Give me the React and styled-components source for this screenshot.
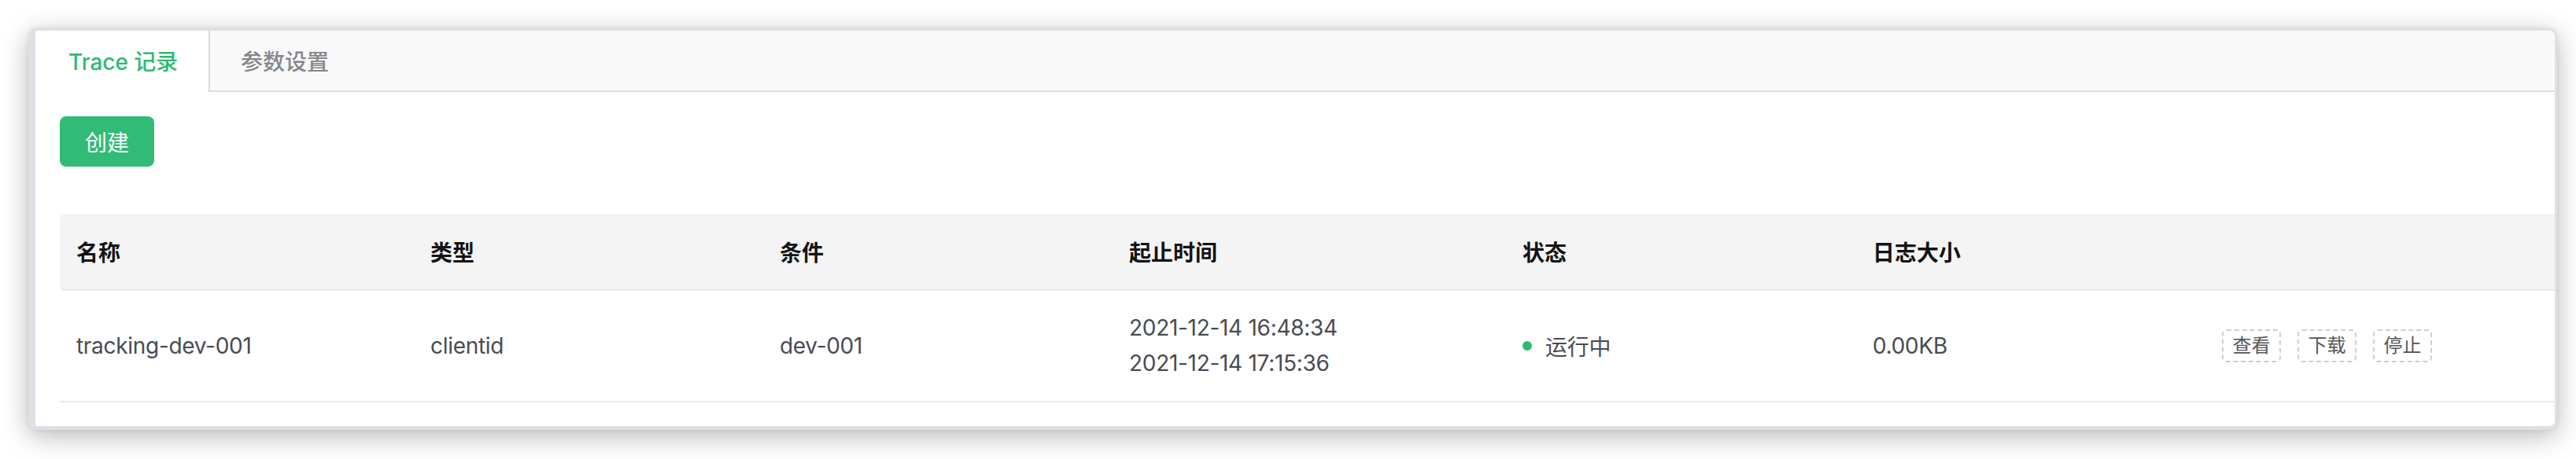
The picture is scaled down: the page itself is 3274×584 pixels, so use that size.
import styled, { createGlobalStyle } from "styled-components";

const GlobalStyle = createGlobalStyle`
  html, body {
    margin: 0;
    padding: 0;
    background: #ffffff;
  }
  body {
    font-family: Inter, "Noto Sans CJK SC", sans-serif;
    -webkit-font-smoothing: antialiased;
  }
  * {
    box-sizing: border-box;
  }
`;

const columns = [
  { key: "name", title: "名称" },
  { key: "type", title: "类型" },
  { key: "condition", title: "条件" },
  { key: "time", title: "起止时间" },
  { key: "status", title: "状态" },
  { key: "size", title: "日志大小" },
  { key: "actions", title: "" },
];

const records = [
  {
    id: 1,
    name: "tracking-dev-001",
    type: "clientid",
    condition: "dev-001",
    start: "2021-12-14 16:48:34",
    end: "2021-12-14 17:15:36",
    status: "运行中",
    size: "0.00KB",
  },
];

export default function App() {
  return (
    <>
      <GlobalStyle />
      <Page>
        <Window>
          <TabBar>
            <Tab $active>Trace 记录</Tab>
            <Tab>参数设置</Tab>
            <TabFill />
          </TabBar>
          <Content>
            <CreateButton>创建</CreateButton>
            <Table>
              <HeaderRow>
                {columns.map((col) => (
                  <HeadCell key={col.key}>{col.title}</HeadCell>
                ))}
              </HeaderRow>
              {records.map((row) => (
                <BodyRow key={row.id}>
                  <Cell>{row.name}</Cell>
                  <Cell>{row.type}</Cell>
                  <Cell>{row.condition}</Cell>
                  <Cell>
                    <TimeRange>
                      <span>{row.start}</span>
                      <span>{row.end}</span>
                    </TimeRange>
                  </Cell>
                  <Cell>
                    <Status>
                      <Dot />
                      {row.status}
                    </Status>
                  </Cell>
                  <Cell>{row.size}</Cell>
                  <Cell>
                    <Actions>
                      <ActionButton>查看</ActionButton>
                      <ActionButton>下载</ActionButton>
                      <ActionButton>停止</ActionButton>
                    </Actions>
                  </Cell>
                </BodyRow>
              ))}
            </Table>
          </Content>
        </Window>
      </Page>
    </>
  );
}

const Page = styled.div`
  padding: 36px 0 0 36px;
  height: 584px;
  overflow: hidden;
`;

const Window = styled.div`
  width: 3214px;
  height: 511px;
  background: #ffffff;
  border-style: solid;
  border-color: #dfe0e6;
  border-width: 3px 3px 5px 9px;
  border-radius: 10px;
  box-shadow: 0 8px 34px rgba(0, 0, 0, 0.28), 0 0 6px rgba(0, 0, 0, 0.08);
  overflow: hidden;
  display: flex;
  flex-direction: column;
`;

const TabBar = styled.div`
  display: flex;
  height: 78px;
  background: #f9f9f9;
`;

const Tab = styled.div`
  display: flex;
  align-items: center;
  flex-shrink: 0;
  white-space: nowrap;
  font-size: 28px;
  font-weight: 500;
  color: ${(p) => (p.$active ? "#30b972" : "#86868c")};
  background: ${(p) => (p.$active ? "#ffffff" : "#f9f9f9")};
  border-bottom: 2px solid ${(p) => (p.$active ? "#ffffff" : "#dedfe2")};
  border-left: ${(p) => (p.$active ? "none" : "2px solid #dadbde")};
  width: ${(p) => (p.$active ? "220px" : "auto")};
  padding: ${(p) => (p.$active ? "0 0 0 42px" : "0 39px")};
`;

const TabFill = styled.div`
  flex: 1;
  border-bottom: 2px solid #dedfe2;
`;

const Content = styled.div`
  flex: 1;
  padding: 31px 0 0 31px;
  overflow: hidden;
`;

const CreateButton = styled.button`
  display: block;
  width: 120px;
  height: 64px;
  border: 0;
  border-radius: 8px;
  background: #32bb77;
  color: #ffffff;
  font-family: inherit;
  font-size: 28px;
  cursor: pointer;
`;

const Table = styled.div`
  margin-top: 60px;
  width: 3300px;
`;

const grid = `
  display: grid;
  grid-template-columns: 450px 444px 444px 500px 445px 444px 1fr;
`;

const HeaderRow = styled.div`
  ${grid}
  height: 98px;
  background: #f4f4f4;
  border-bottom: 2px solid #e7eaf1;
  border-radius: 8px 0 0 6px;
`;

const HeadCell = styled.div`
  display: flex;
  align-items: center;
  padding-left: 21px;
  font-size: 28px;
  font-weight: 700;
  color: #141414;
`;

const BodyRow = styled.div`
  ${grid}
  height: 142px;
  border-bottom: 2px solid #e7eaf1;
`;

const Cell = styled.div`
  display: flex;
  align-items: center;
  padding-left: 21px;
  font-size: 28px;
  letter-spacing: -0.3px;
  color: #4a4b52;
`;

const TimeRange = styled.div`
  display: flex;
  flex-direction: column;
  line-height: 45px;
`;

const Status = styled.div`
  display: flex;
  align-items: center;
  gap: 17px;
`;

const Dot = styled.span`
  width: 12px;
  height: 12px;
  border-radius: 50%;
  background: #2dbb74;
`;

const Actions = styled.div`
  display: flex;
  gap: 21px;
`;

const ActionButton = styled.button`
  width: 75px;
  height: 42px;
  padding: 0;
  border: 2px dashed #cfcfd2;
  border-radius: 6px;
  background: #ffffff;
  color: #555558;
  font-family: inherit;
  font-size: 24px;
  letter-spacing: 0;
  line-height: 36px;
  text-align: center;
  cursor: pointer;
`;
